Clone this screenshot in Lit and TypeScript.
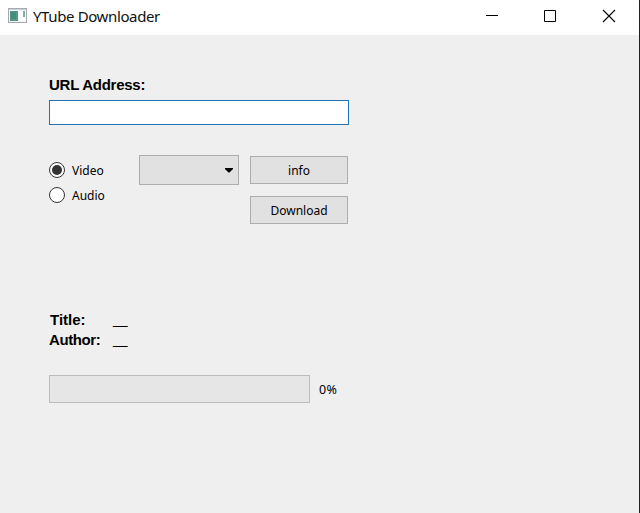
import { LitElement, html, css } from "lit";
import { customElement, property, state } from "lit/decorators.js";
import { classMap } from "lit/directives/class-map.js";

@customElement("title-bar")
class TitleBar extends LitElement {
  static styles = css`
    :host { display: flex; height: 35px; background: #fff; align-items: center; }
    .logo { margin: -3px 6px 0 8px; display: block; }
    .name { flex: 1; font: 15px/20px "Noto Sans", sans-serif; letter-spacing: -0.38px; color: #111; white-space: nowrap; margin-top: -4px; }
    .controls { display: flex; width: 177px; height: 35px; }
    .controls svg { display: block; width: 59px; height: 35px; }
  `;
  render() {
    return html`
      <svg class="logo" width="19" height="16" viewBox="0 0 19 16" shape-rendering="crispEdges">
        <rect x=".5" y=".5" width="18" height="14" fill="#f2f4f5" stroke="#a4abb2" />
        <rect x="1" y="1" width="17" height="1" fill="#c9d0d6" />
        <rect x="2" y="3" width="8" height="10" fill="#579785" />
        <rect x="3" y="4" width="5" height="7" fill="#438d7d" />
        <rect x="11" y="3" width="6" height="10" fill="#fff" />
        <rect x="15" y="3" width="2" height="6" fill="#83afa2" />
      </svg>
      <div class="name">YTube Downloader</div>
      <div class="controls">
        <svg viewBox="0 0 59 35"><path d="M24 15.5h12" stroke="#000" /></svg>
        <svg viewBox="0 0 59 35"><path d="M23.5 10.5h11v11h-11z" fill="none" stroke="#000" /></svg>
        <svg viewBox="0 0 59 35"><path d="M23 10l12 12M35 10l-12 12" stroke="#000" stroke-width="1.1" /></svg>
      </div>`;
  }
}

@customElement("radio-option")
class RadioOption extends LitElement {
  @property() label = "";
  @property({ type: Boolean }) checked = false;
  static styles = css`
    :host { display: flex; align-items: center; height: 16px; gap: 7px; }
    .ring { box-sizing: border-box; width: 16px; height: 16px; border: 1px solid #333; border-radius: 50%; background: #fff; display: grid; place-items: center; }
    .on::after { content: ""; width: 10px; height: 10px; border-radius: 50%; background: #333; }
    .text { font: 12px/16px "Noto Sans", sans-serif; color: #000; padding-top: 2px; }
  `;
  render() {
    return html`<span class=${classMap({ ring: true, on: this.checked })}></span><span class="text">${this.label}</span>`;
  }
}

@customElement("app-root")
class AppRoot extends LitElement {
  @state() private mode = "Video";
  @state() private percent = 0;

  static styles = css`
    :host { display: block; box-sizing: border-box; width: 640px; height: 513px; background: #efefef; border-right: 1px solid #202124; overflow: hidden; font: 12px/16px "Noto Sans", sans-serif; color: #000; }
    .body { padding: 40px 0 0 49px; }
    .bold { font: bold 15px/20px "Liberation Sans", sans-serif; letter-spacing: -0.25px; white-space: nowrap; }
    .url { display: block; box-sizing: border-box; width: 300px; height: 25px; margin: 5px 0 0; padding: 0 4px; border: 1px solid #1f72b5; background: #fff; outline: none; }
    .options { display: flex; align-items: flex-start; margin-top: 30px; height: 69px; }
    .radios { display: flex; flex-direction: column; gap: 9px; width: 90px; padding-top: 7px; }
    .combo { box-sizing: border-box; width: 100px; height: 30px; background: #e1e1e1; border: 1px solid #adadad; display: flex; align-items: center; justify-content: flex-end; padding-right: 5px; }
    .buttons { display: flex; flex-direction: column; gap: 12px; margin: 1px 0 0 11px; }
    button { box-sizing: border-box; width: 98px; height: 28px; padding: 2px 0 0; background: #e1e1e1; border: 1px solid #adadad; border-radius: 0; font: inherit; color: inherit; }
    .meta { display: grid; grid-template-columns: 64px auto; grid-auto-rows: 20px; margin-top: 86px; }
    .title { padding-left: 1px; letter-spacing: 0; }
    .author { letter-spacing: -0.4px; }
    .value { font: 14px/18px "Liberation Sans", sans-serif; letter-spacing: -1px; }
    .progress { display: flex; align-items: center; margin-top: 25px; gap: 9px; }
    .track { box-sizing: border-box; width: 261px; height: 28px; background: #e6e6e6; border: 1px solid #bcbcbc; }
    .fill { height: 100%; background: #06b025; }
    .percent { font-size: 12.5px; letter-spacing: 0.3px; padding-top: 2px; }
  `;

  render() {
    return html`
      <title-bar></title-bar>
      <div class="body">
        <div class="bold">URL Address:</div>
        <input class="url" />
        <div class="options">
          <div class="radios">
            ${["Video", "Audio"].map(
              (m) => html`<radio-option .label=${m} .checked=${this.mode === m} @click=${() => (this.mode = m)}></radio-option>`
            )}
          </div>
          <div class="combo">
            <svg width="8" height="5" viewBox="0 0 8 5"><path d="M0 0h8v1L4.5 4.5h-1L0 1z" fill="#000" /></svg>
          </div>
          <div class="buttons"><button>info</button><button>Download</button></div>
        </div>
        <div class="meta">
          <div class="bold title">Title:</div><div class="value">__</div>
          <div class="bold author">Author:</div><div class="value">__</div>
        </div>
        <div class="progress">
          <div class="track"><div class="fill" style="width:${this.percent}%"></div></div>
          <span class="percent">${this.percent}%</span>
        </div>
      </div>`;
  }
}
